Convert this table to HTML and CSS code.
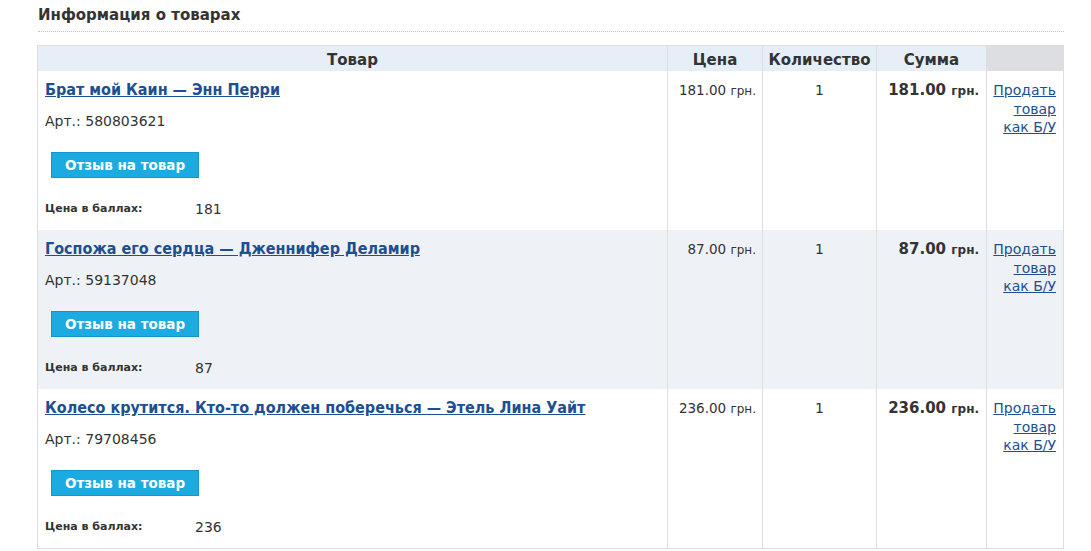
FILE: index.html
```html
<!DOCTYPE html>
<html lang="ru">
<head>
    <meta charset="UTF-8">
    <title>Информация о товарах</title>
    <link rel="stylesheet" href="styles.css">
</head>
<body>

    <div class="order-info">
        <h2 class="section-title">Информация о товарах</h2>

        <table class="goods">
            <thead>
                <tr>
                    <th class="col-name">Товар</th>
                    <th class="col-price">Цена</th>
                    <th class="col-qty">Количество</th>
                    <th class="col-sum">Сумма</th>
                    <th class="col-sell"></th>
                </tr>
            </thead>
            <tbody>
                <tr>
                    <td class="col-name">
                        <a class="item-title" href="#">Брат мой Каин — Энн Перри</a>
                        <div class="item-art">Арт.: 580803621</div>
                        <button class="review-btn">Отзыв на товар</button>
                        <div class="item-points"><span class="points-label">Цена в баллах:</span><span>181</span></div>
                    </td>
                    <td class="col-price">181.00 <small>грн.</small></td>
                    <td class="col-qty">1</td>
                    <td class="col-sum">181.00 <small>грн.</small></td>
                    <td class="col-sell"><a href="#">Продать товар как&nbsp;Б/У</a></td>
                </tr>
                <tr>
                    <td class="col-name">
                        <a class="item-title" href="#">Госпожа его сердца — Дженнифер Деламир</a>
                        <div class="item-art">Арт.: 59137048</div>
                        <button class="review-btn">Отзыв на товар</button>
                        <div class="item-points"><span class="points-label">Цена в баллах:</span><span>87</span></div>
                    </td>
                    <td class="col-price">87.00 <small>грн.</small></td>
                    <td class="col-qty">1</td>
                    <td class="col-sum">87.00 <small>грн.</small></td>
                    <td class="col-sell"><a href="#">Продать товар как&nbsp;Б/У</a></td>
                </tr>
                <tr>
                    <td class="col-name">
                        <a class="item-title" href="#">Колесо крутится. Кто-то должен поберечься — Этель Лина Уайт</a>
                        <div class="item-art">Арт.: 79708456</div>
                        <button class="review-btn">Отзыв на товар</button>
                        <div class="item-points"><span class="points-label">Цена в баллах:</span><span>236</span></div>
                    </td>
                    <td class="col-price">236.00 <small>грн.</small></td>
                    <td class="col-qty">1</td>
                    <td class="col-sum">236.00 <small>грн.</small></td>
                    <td class="col-sell"><a href="#">Продать товар как&nbsp;Б/У</a></td>
                </tr>
            </tbody>
        </table>
    </div>

</body>
</html>
```

FILE: styles.css
```css
body {
    font-family: 'DejaVu Sans', Verdana, sans-serif;
    background-color: #fff;
    color: #333;
    margin: 0;
    padding: 0;
}

.order-info {
    padding: 0 27px 0 37px;
}

.section-title {
    margin: 0 0 13px 1px;
    padding: 6px 0 7px;
    font-size: 15px;
    line-height: 18px;
    font-weight: bold;
    color: #333;
    border-bottom: 1px dotted #c4c4c4;
}

.goods {
    width: 1027px;
    border-collapse: collapse;
    border: 1px solid #dedede;
    table-layout: fixed;
}

.goods th {
    height: 23px;
    padding: 2px 0 0;
    background-color: #e6eef8;
    font-size: 15px;
    font-weight: bold;
    color: #333;
    text-align: center;
    border-left: 1px solid #dedede;
}

.goods th.col-name { width: 629px; }
.goods th.col-price { width: 94px; }
.goods th.col-qty { width: 113px; }
.goods th.col-sum { width: 109px; }
.goods th.col-sell { width: 76px; }

.goods th.col-sell {
    background-color: #dcdee1;
}

.goods td {
    vertical-align: top;
    padding: 10px 7px 12px;
    border-left: 1px solid #dedede;
    font-size: 13.5px;
    line-height: 18px;
}

.goods tbody tr:nth-child(even) td {
    background-color: #eef2f6;
}

td.col-price {
    text-align: right;
    padding-right: 6px;
    white-space: nowrap;
}

td.col-qty {
    text-align: center;
    font-size: 14px;
}

td.col-sum {
    text-align: right;
    font-weight: bold;
    font-size: 15px;
    white-space: nowrap;
}

.goods small {
    font-size: 12px;
}

td.col-sell {
    text-align: right;
    font-size: 14px;
    line-height: 18.5px;
    padding: 10px 7px 12px 2px;
}

td.col-sell a {
    color: #1d4f91;
}

.item-title {
    display: block;
    font-family: 'DejaVu Sans Condensed', 'DejaVu Sans', sans-serif;
    font-size: 16px;
    font-weight: bold;
    color: #1d4f91;
    line-height: 18px;
}

.item-art {
    margin-top: 13px;
    font-size: 14px;
    line-height: 18px;
}

.review-btn {
    display: block;
    margin: 22px 0 0 6px;
    height: 26px;
    width: 148px;
    padding: 0;
    background-color: #1babe0;
    border: 1px solid #1696c6;
    color: #fff;
    font-family: inherit;
    font-size: 13.5px;
    font-weight: bold;
    cursor: pointer;
}

.item-points {
    display: flex;
    margin-top: 22px;
    font-size: 14px;
    line-height: 18px;
}

.points-label {
    width: 150px;
    font-size: 11px;
    font-weight: bold;
}
```
